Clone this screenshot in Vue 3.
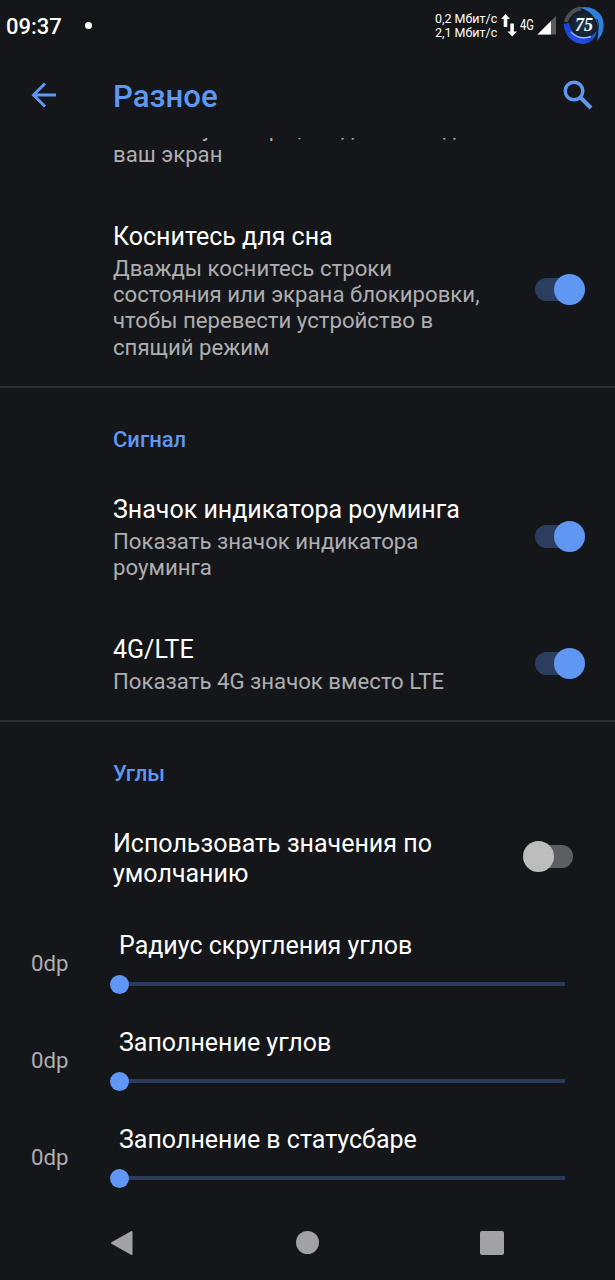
<script setup>
import { ref } from 'vue';

const sections = ref([
    {
        items: [
            { title: 'Коснитесь для сна', summary: 'Дважды коснитесь строки состояния или экрана блокировки, чтобы перевести устройство в спящий режим', on: true }
        ]
    },
    {
        name: 'Сигнал',
        items: [
            { title: 'Значок индикатора роуминга', summary: 'Показать значок индикатора роуминга', on: true },
            { title: '4G/LTE', summary: 'Показать 4G значок вместо LTE', on: true }
        ]
    },
    {
        name: 'Углы',
        items: [
            { title: 'Использовать значения по умолчанию', on: false }
        ]
    }
]);

const sliders = ref([
    { title: 'Радиус скругления углов', value: 0 },
    { title: 'Заполнение углов', value: 0 },
    { title: 'Заполнение в статусбаре', value: 0 }
]);
</script>

<template>
    <div class="screen">
        <div class="statusbar">
            <span class="clock">09:37</span>
            <span class="dot"></span>
            <div class="speed">
                <span>0,2 Мбит/с</span>
                <span>2,1 Мбит/с</span>
            </div>
            <svg class="arrows" width="16" height="23" viewBox="0 0 16 23" fill="#fff">
                <path d="M4.5 0L9 5H6.3V13H2.7V5H0z" />
                <path d="M9.3 9.5h3.6v8H16L11.2 22.5L6.5 17.5h2.8z" />
            </svg>
            <span class="net">4G</span>
            <svg class="signal" width="20" height="19" viewBox="0 0 20 19">
                <path d="M19 0V18.5H.5z" fill="#5b5c5e" />
                <path d="M14 5V18.5H.5z" fill="#fff" />
            </svg>
            <svg class="battery" width="44" height="40" viewBox="0 0 44 40">
                <defs>
                    <linearGradient id="ring" x1="0" y1="1" x2="1" y2="0">
                        <stop offset="0" stop-color="#2a5cf0" />
                        <stop offset="0.5" stop-color="#1c40d8" />
                        <stop offset="1" stop-color="#3a8fe0" />
                    </linearGradient>
                    <radialGradient id="core">
                        <stop offset="0" stop-color="#1d3a54" />
                        <stop offset="1" stop-color="#121a26" />
                    </radialGradient>
                </defs>
                <circle cx="22" cy="20" r="15" fill="url(#core)" />
                <path d="M4 17A17.500 17.500 0 0 1 19 3.500" fill="none" stroke="#4c4e53" stroke-width="4" />
                <path d="M17 2.500Q33 0 40 12Q45 25 35 36Q38 24 34 15Q28 5 17 2.500z" fill="#2f7fdc" />
                <path d="M1.500 19L7 18Q9 30 20 32.500Q29 33.500 35 26Q32 38.500 20 39Q4 37 1.500 19z" fill="url(#ring)" />
                <path d="M9 27Q17 35.500 29 31.500" fill="none" stroke="#8fb8f8" stroke-width="1.500" />
                <path d="M35 28Q38 20 35 14" fill="none" stroke="#14202e" stroke-width="1" />
                <text x="22" y="25.500" text-anchor="middle" class="percent">75</text>
            </svg>
        </div>

        <header class="toolbar">
            <svg class="back" width="26" height="26" viewBox="0 0 26 26" fill="none" stroke="#6097f0" stroke-width="3">
                <path d="M25 13H3M14 1.500L2.500 13L14 24.500" />
            </svg>
            <h1>Разное</h1>
            <svg class="search" width="30" height="30" viewBox="0 0 30 30" fill="none" stroke="#6097f0">
                <circle cx="11" cy="11" r="8.800" stroke-width="3.400" />
                <path d="M17 17L28 28" stroke-width="4" />
            </svg>
        </header>

        <main class="list">
            <p class="summary cut"><span class="tight">за кнопку камеры</span>, когда вы вход<br>ваш экран</p>

            <section v-for="(section, i) in sections" :key="i">
                <h2 v-if="section.name">{{ section.name }}</h2>
                <div v-for="item in section.items" :key="item.title" class="row" @click="item.on = !item.on">
                    <div class="text">
                        <div class="title">{{ item.title }}</div>
                        <p v-if="item.summary" class="summary">{{ item.summary }}</p>
                    </div>
                    <div class="switch" :class="{ on: item.on }"><span class="knob"></span></div>
                </div>
            </section>

            <div v-for="slider in sliders" :key="slider.title" class="slider">
                <span class="value">{{ slider.value }}dp</span>
                <div class="control">
                    <div class="title">{{ slider.title }}</div>
                    <div class="track"><span class="thumb" :style="{ left: slider.value + '%' }"></span></div>
                </div>
            </div>
        </main>

        <nav class="navbar">
            <svg width="24" height="26" viewBox="0 0 24 26">
                <path d="M2 13L21.500 2V24z" fill="#a2a2a5" stroke="#a2a2a5" stroke-width="2" stroke-linejoin="round" />
            </svg>
            <span class="home"></span>
            <span class="recent"></span>
        </nav>
    </div>
</template>

<style>
body {
    margin: 0;
    background: #14161a;
}
</style>

<style scoped>
.screen {
    display: flex;
    flex-direction: column;
    width: 615px;
    height: 1280px;
    overflow: hidden;
    background: #14161a;
    color: #fff;
    font-family: Roboto, "Noto Sans", sans-serif;
}

h1, h2, p {
    margin: 0;
    font-weight: 400;
}

.statusbar {
    display: flex;
    align-items: center;
    flex: none;
    height: 50px;
    padding-left: 6px;
}

.clock {
    width: 56px;
    font-size: 22px;
    font-weight: 500;
    line-height: 26px;
    margin-top: 3px;
}

.dot {
    width: 7px;
    height: 7px;
    margin-left: 23px;
    border-radius: 50%;
    background: #fff;
}

.speed {
    display: flex;
    flex-direction: column;
    width: 62px;
    margin-left: 343px;
    margin-top: 2px;
    font-size: 12.5px;
    line-height: 14px;
    white-space: nowrap;
}

.arrows {
    margin-left: 4px;
}

.net {
    width: 18px;
    margin-left: 3px;
    font-size: 14px;
    transform: scaleX(0.8);
    transform-origin: left;
}

.signal {
    margin-left: -1px;
    margin-top: 1px;
}

.battery {
    margin-left: 5px;
}

.percent {
    font: italic bold 18px "Liberation Serif", serif;
    fill: #fff;
}

.toolbar {
    display: flex;
    align-items: center;
    flex: none;
    height: 88px;
    padding: 1px 22px 0 31px;
    box-sizing: border-box;
}

.toolbar h1 {
    flex: 1;
    margin-left: 56px;
    margin-top: 4px;
    color: #6097f0;
    font-size: 31.2px;
    font-weight: 500;
    line-height: 38px;
}

.list {
    flex: none;
    height: 1067px;
    overflow: hidden;
}

.summary {
    color: #aeaeb1;
    font-size: 22.2px;
    line-height: 26.2px;
}

.cut {
    margin: -23.2px 0 28px 113px;
}

.tight {
    letter-spacing: -0.25px;
}

h2 {
    height: 26px;
    padding: 39px 0 15px 113px;
    border-top: 2px solid #2c2d31;
    margin-top: -1.7px;
    color: #6097f0;
    font-size: 22px;
    font-weight: 500;
    line-height: 26px;
}

.row {
    display: flex;
    align-items: center;
    justify-content: space-between;
    padding: 27.2px 30px 27.2px 113px;
}

.text {
    width: 375px;
}

.title {
    font-size: 25px;
    line-height: 29.5px;
}

.text .summary {
    margin-top: 3px;
    margin-bottom: 0.8px;
}

.switch {
    display: flex;
    align-items: center;
    width: 38px;
    height: 23px;
    margin: 0 12.5px 4px 0;
    border-radius: 12px;
    background: #5d5e60;
}

.knob {
    flex: none;
    width: 31px;
    height: 31px;
    margin-left: -12px;
    border-radius: 50%;
    background: #bdbdbd;
}

.switch.on {
    background: #2b3e5f;
}

.switch.on .knob {
    margin-left: 19px;
    background: #6097f2;
}

.slider {
    display: flex;
    align-items: center;
    height: 97px;
    padding-left: 31px;
}

.value {
    width: 88px;
    margin-bottom: 3px;
    color: #aeaeb1;
    font-size: 22.2px;
    line-height: 26px;
}

.control {
    width: 446px;
    margin-bottom: 11.5px;
}

.track {
    position: relative;
    height: 4px;
    margin-top: 22px;
    background: #2b3c5b;
}

.thumb {
    position: absolute;
    top: -7.5px;
    width: 19px;
    height: 19px;
    margin-left: -9.5px;
    border-radius: 50%;
    background: #6097f7;
}

.navbar {
    display: flex;
    align-items: center;
    justify-content: space-between;
    flex: none;
    height: 75px;
    padding: 0 111px 0 110px;
}

.home {
    width: 23px;
    height: 23px;
    border-radius: 50%;
    background: #a2a2a5;
}

.recent {
    width: 24px;
    height: 24px;
    border-radius: 2px;
    background: #a2a2a5;
}
</style>
